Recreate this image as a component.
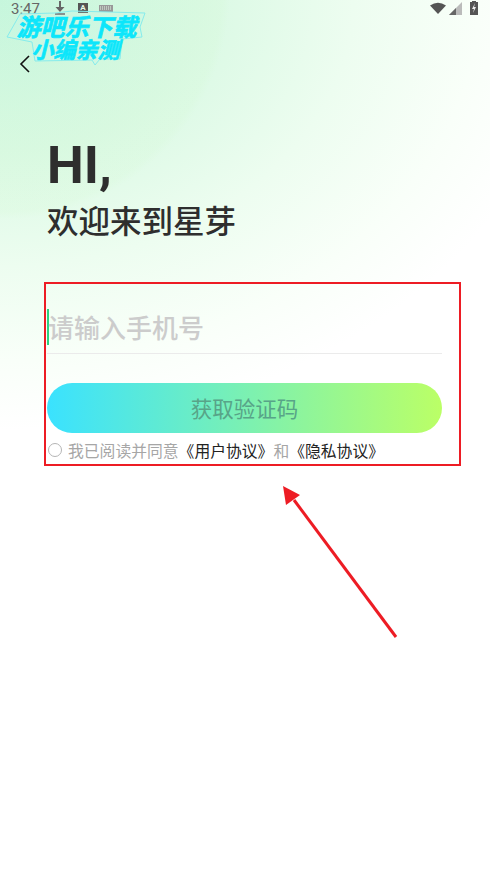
<div class="page">
  <div class="status">
    <span class="time">3:47</span>
    <svg class="ic-down" width="10" height="14" viewBox="0 0 10 14"><path d="M4 0h2v6h3.5L5 11 .5 6H4z" fill="#666"/><rect x="0" y="12" width="10" height="2" fill="#777"/></svg>
    <span class="a-box">A</span>
    <svg class="ic-keys" width="14" height="7" viewBox="0 0 14 7"><rect width="14" height="7" fill="#999"/><path d="M1 2h12M1 4h12" stroke="#e4f7e4" stroke-dasharray="1 1"/></svg>
    <span class="spacer"></span>
    <svg width="16" height="12" viewBox="0 0 16 12"><path d="M0 3.5Q8-2 16 3.5L8 12z" fill="#555"/></svg>
    <svg class="ic-signal" width="13" height="13" viewBox="0 0 13 13"><path d="M13 0v13H0z" fill="#bbb"/><path d="M7 6v7H0z" fill="#666"/></svg>
    <svg class="ic-batt" width="8" height="14" viewBox="0 0 8 14"><path d="M2 1V0h4v1h2v13H0V1z" fill="#555"/><path d="M5 2 2 8h2l-1 4 3-6H4z" fill="#eee"/></svg>
  </div>

  <button class="back" aria-label="返回">
    <svg width="12" height="20" viewBox="0 0 12 20"><path d="M10 2 2 10l8 8" fill="none" stroke="#111" stroke-width="1.6"/></svg>
  </button>

  <main class="content">
    <h1>HI,</h1>
    <h2>欢迎来到星芽</h2>

    <div class="field">
      <span class="caret"></span>
      <span class="placeholder">请输入手机号</span>
    </div>
    <div class="submit">获取验证码</div>
    <div class="agree">
      <span class="radio"></span>
      <span class="grey">我已阅读并同意</span>
      <span class="dark">《用户协议》</span>
      <span class="grey">和</span>
      <span class="dark">《隐私协议》</span>
    </div>
  </main>

  <!-- watermark and annotations on top of the screenshot -->
  <div class="mark">
    <svg class="mark-bg" width="150" height="70" viewBox="0 0 150 70">
      <path d="M20 14 55 13 72 11 145 13 140 27 142 37 122 39 120 59 100 59 95 65 92 60 35 61 32 42 7 37 15 23Z" fill="rgba(200,250,240,.2)" stroke="#86ecec" stroke-width="1"/>
    </svg>
    <div class="l1">游吧乐下载</div>
    <div class="l2">小编亲测</div>
  </div>

  <div class="redbox"></div>
  <svg class="arrow" width="140" height="180" viewBox="270 470 140 180">
    <path d="M396 637 294 500" stroke="#ed1c24" stroke-width="3" fill="none"/>
    <path d="M283 486 300 495 286 505z" fill="#ed1c24"/>
  </svg>
</div>

<style>
  :global(body) {
    margin: 0;
    background: #fff;
  }

  .page {
    position: relative;
    width: 490px;
    height: 873px;
    overflow: hidden;
    font-family: "Noto Sans CJK SC", "Noto Sans", sans-serif;
    background:
      radial-gradient(circle at 0 -10px, rgba(200, 248, 190, .1) 222px, rgba(200, 248, 190, 0) 230px),
      radial-gradient(ellipse 570px 430px at 0 0, #c6f6e0 0%, #daf9e4 35%, #edfdf0 62%, #f9fff9 84%, #fff 100%);
  }

  .status {
    display: flex;
    align-items: center;
    height: 16px;
    padding: 0 12px 0 11px;
    color: #666;
  }

  .time {
    font-family: Roboto, sans-serif;
    font-size: 15px;
    line-height: 16px;
    margin-top: 2px;
  }

  .ic-down {
    margin-left: 15px;
  }

  .a-box {
    margin-left: 13px;
    width: 10px;
    height: 10px;
    background: #555;
    color: #e8f8e8;
    font: 700 8px/10px Roboto, sans-serif;
    text-align: center;
  }

  .ic-keys {
    margin-left: 11px;
  }

  .ic-signal {
    margin-left: 3px;
  }

  .ic-batt {
    margin-left: 8px;
  }

  .spacer {
    flex: 1;
  }

  .back {
    display: block;
    margin: 38px 0 0 19px;
    padding: 0;
    border: 0;
    background: none;
    height: 22px;
  }

  .content {
    padding: 0 48px 0 47px;
  }

  h1 {
    margin: 60px 0 0;
    font-family: Roboto, sans-serif;
    font-size: 52px;
    line-height: 60px;
    font-weight: 700;
    color: #2e2e2e;
  }

  h2 {
    margin: 2px 0 0;
    font-size: 31.5px;
    line-height: 42px;
    font-weight: 500;
    color: #2e2e2e;
  }

  .field {
    display: flex;
    align-items: flex-start;
    height: 44px;
    margin-top: 48px;
    padding-top: 21px;
    border-bottom: 1px solid #ebebeb;
  }

  .caret {
    flex: none;
    width: 2px;
    height: 36px;
    background: #2fd07f;
  }

  .placeholder {
    margin-left: -1px;
    font-size: 26px;
    line-height: 36px;
    font-weight: 500;
    color: #ccc;
  }

  .submit {
    height: 50px;
    margin-top: 29px;
    border-radius: 25px;
    background: linear-gradient(90deg, #3ae2ff, #bbff66);
    color: #58a488;
    font-size: 21.5px;
    line-height: 50px;
    text-align: center;
  }

  .agree {
    display: flex;
    align-items: center;
    height: 24px;
    margin-top: 5px;
    font-size: 15.8px;
    white-space: nowrap;
  }

  .radio {
    box-sizing: border-box;
    width: 14px;
    height: 14px;
    margin: 0 6px 0 1px;
    border: 1px solid #b5b5b5;
    border-radius: 50%;
  }

  .grey {
    color: #a6a6a6;
  }

  .dark {
    color: #222;
  }

  .mark {
    position: absolute;
    left: 0;
    top: 0;
    width: 150px;
    padding-top: 12px;
    color: #0ce6fb;
    font-weight: 700;
    -webkit-text-stroke: .7px #0ce6fb;
  }

  .mark-bg {
    position: absolute;
    left: 0;
    top: 0;
  }

  .l1,
  .l2 {
    position: relative;
    transform: skewX(-14deg);
    white-space: nowrap;
  }

  .l1 {
    padding-left: 19px;
    font-size: 24px;
    line-height: 28px;
  }

  .l2 {
    margin-top: -4px;
    padding-left: 34px;
    font-size: 22px;
    line-height: 24px;
  }

  .redbox {
    position: absolute;
    left: 44px;
    top: 282px;
    width: 413px;
    height: 180px;
    border: 2px solid #ed1c24;
  }

  .arrow {
    position: absolute;
    left: 270px;
    top: 470px;
  }
</style>
